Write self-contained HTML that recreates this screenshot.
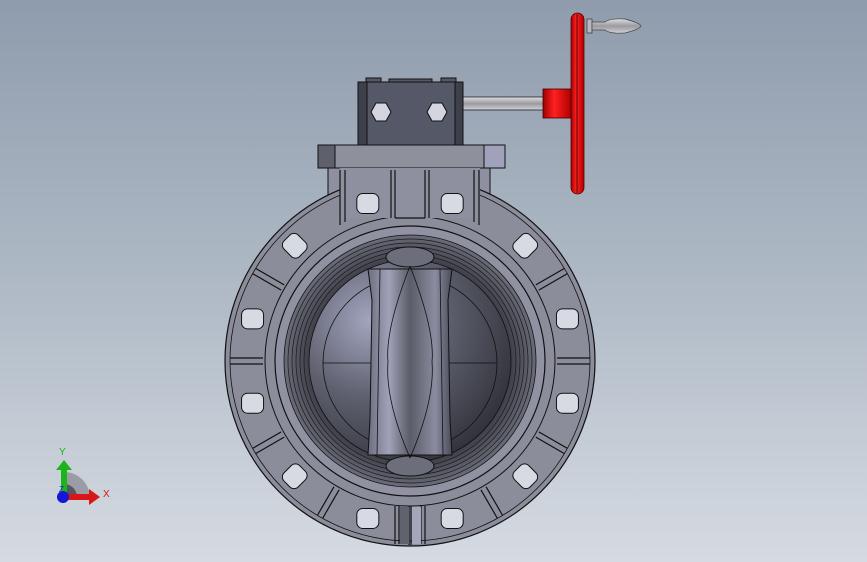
<!DOCTYPE html>
<html><head><meta charset="utf-8"><style>
html,body{margin:0;padding:0;width:867px;height:562px;overflow:hidden}
svg{display:block}
</style></head><body>
<svg width="867" height="562" viewBox="0 0 867 562" xmlns="http://www.w3.org/2000/svg">
<defs>
<linearGradient id="bg" x1="0" y1="0" x2="0" y2="1">
<stop offset="0" stop-color="#8f9cad"/><stop offset="0.55" stop-color="#b2bcc8"/><stop offset="1" stop-color="#d6dbe2"/>
</linearGradient>
<radialGradient id="ball" cx="0.3" cy="0.3" r="0.85">
<stop offset="0" stop-color="#a3a5c0"/><stop offset="0.45" stop-color="#5e606e"/><stop offset="1" stop-color="#2a2b32"/>
</radialGradient>
<radialGradient id="bore" cx="0.5" cy="0.5" r="0.5">
<stop offset="0.75" stop-color="#33343c"/><stop offset="1" stop-color="#6a6c78"/>
</radialGradient>
<linearGradient id="disc" x1="0" y1="0" x2="1" y2="0">
<stop offset="0" stop-color="#6d6f80"/><stop offset="0.25" stop-color="#a0a2b8"/><stop offset="0.5" stop-color="#5a5c68"/><stop offset="0.8" stop-color="#8a8ca0"/><stop offset="1" stop-color="#4a4c58"/>
</linearGradient>
<linearGradient id="red" x1="0" y1="0" x2="1" y2="0">
<stop offset="0" stop-color="#a00000"/><stop offset="0.4" stop-color="#ff2020"/><stop offset="1" stop-color="#b00000"/>
</linearGradient>
<linearGradient id="rod" x1="0" y1="0" x2="0" y2="1">
<stop offset="0" stop-color="#e0e0e4"/><stop offset="0.5" stop-color="#9a9aa0"/><stop offset="1" stop-color="#d0d0d6"/>
</linearGradient>
<g id="hole"><rect x="-11" y="-10" width="22" height="20" rx="6" fill="#d6dae2" stroke="#111" stroke-width="1"/></g>
</defs>
<rect width="867" height="562" fill="url(#bg)"/>

<!-- handwheel assembly -->
<rect x="463" y="97" width="82" height="13" fill="url(#rod)" stroke="#222" stroke-width="0.8"/>
<rect x="543" y="89" width="28" height="29" fill="url(#red)" stroke="#400" stroke-width="0.8"/>
<rect x="571" y="13" width="13" height="181" rx="6.5" fill="url(#red)" stroke="#500" stroke-width="0.8"/>
<line x1="577" y1="14" x2="577" y2="193" stroke="#300" stroke-width="0.8"/>
<rect x="587" y="19" width="5" height="14" fill="#b8b8c0" stroke="#333" stroke-width="0.7"/>
<path d="M592 22 L605 22 Q610 18 625 19 Q640 23 641 26 Q640 29 625 33 Q610 34 605 30 L592 30 Z" fill="url(#rod)" stroke="#444" stroke-width="0.7"/>

<!-- gearbox -->
<rect x="366" y="78" width="15" height="5" fill="#555866" stroke="#111"/>
<rect x="441" y="78" width="15" height="5" fill="#555866" stroke="#111"/>
<rect x="389" y="79" width="43" height="4" fill="#555866" stroke="#111"/>
<rect x="358" y="82" width="105" height="64" fill="#555867" stroke="#111"/>
<rect x="358" y="82" width="9" height="64" fill="#3e404b" stroke="#111"/>
<rect x="455" y="82" width="8" height="64" fill="#3e404b" stroke="#111"/>
<polygon points="376,103 386,103 391,112 386,121 376,121 371,112" fill="#d4d5e0" stroke="#111"/>
<polygon points="432,103 442,103 447,112 442,121 432,121 427,112" fill="#d4d5e0" stroke="#111"/>

<!-- neck -->
<rect x="328" y="168" width="162" height="40" fill="#8e909f" stroke="#111"/>
<rect x="318" y="145" width="187" height="23" fill="#8e909c" stroke="#111"/>
<rect x="318" y="145" width="17" height="23" fill="#5e606c" stroke="#111"/>
<rect x="484" y="145" width="21" height="23" fill="#a0a2bb" stroke="#111"/>

<!-- flange -->
<circle cx="410" cy="361" r="185" fill="#8b8d9b" stroke="#111" stroke-width="1.2"/>
<circle cx="410" cy="361" r="180" fill="none" stroke="#111" stroke-width="0.8"/>
<circle cx="410" cy="361" r="145" fill="none" stroke="#111" stroke-width="1"/>
<rect x="340" y="168" width="140" height="50" fill="#8e909f" stroke="none"/>
<g stroke="#111" stroke-width="1.2">
<line x1="340" y1="170" x2="340" y2="225"/><line x1="345" y1="170" x2="345" y2="222"/>
<line x1="391" y1="170" x2="391" y2="218"/><line x1="395" y1="170" x2="395" y2="218"/>
<line x1="425" y1="170" x2="425" y2="218"/><line x1="429" y1="170" x2="429" y2="218"/>
<line x1="474" y1="170" x2="474" y2="222"/><line x1="479" y1="170" x2="479" y2="225"/>
<line x1="395" y1="218" x2="425" y2="218"/>
</g>
<g stroke="#111" stroke-width="1.2" fill="none">
<g transform="translate(410,361)">
<line x1="147" y1="-3" x2="180" y2="-3"/><line x1="147" y1="3" x2="180" y2="3"/>
<line x1="-147" y1="-3" x2="-180" y2="-3"/><line x1="-147" y1="3" x2="-180" y2="3"/>
<g transform="rotate(30)"><line x1="147" y1="-3" x2="180" y2="-3"/><line x1="147" y1="3" x2="180" y2="3"/></g>
<g transform="rotate(60)"><line x1="147" y1="-3" x2="180" y2="-3"/><line x1="147" y1="3" x2="180" y2="3"/></g>
<g transform="rotate(120)"><line x1="147" y1="-3" x2="180" y2="-3"/><line x1="147" y1="3" x2="180" y2="3"/></g>
<g transform="rotate(150)"><line x1="147" y1="-3" x2="180" y2="-3"/><line x1="147" y1="3" x2="180" y2="3"/></g>
<g transform="rotate(-30)"><line x1="147" y1="-3" x2="180" y2="-3"/><line x1="147" y1="3" x2="180" y2="3"/></g>
<g transform="rotate(-150)"><line x1="147" y1="-3" x2="180" y2="-3"/><line x1="147" y1="3" x2="180" y2="3"/></g>
<line x1="-15" y1="145" x2="-15" y2="183"/><line x1="-11" y1="145" x2="-11" y2="183"/>
<line x1="11" y1="145" x2="11" y2="183"/><line x1="15" y1="145" x2="15" y2="183"/>
<line x1="-1" y1="145" x2="-1" y2="184"/><line x1="1" y1="145" x2="1" y2="184"/>
</g>
</g>
<rect x="400" y="507" width="9" height="37" fill="#606270"/>
<rect x="412" y="507" width="9" height="37" fill="#a4a6bc"/>
<g transform="translate(410,361)">
<g transform="rotate(15) translate(163,0) rotate(-15)"><use href="#hole"/></g>
<g transform="rotate(45) translate(163,0)"><use href="#hole"/></g>
<g transform="rotate(75) translate(163,0) rotate(-75)"><use href="#hole"/></g>
<g transform="rotate(105) translate(163,0) rotate(-105)"><use href="#hole"/></g>
<g transform="rotate(135) translate(163,0)"><use href="#hole"/></g>
<g transform="rotate(165) translate(163,0) rotate(-165)"><use href="#hole"/></g>
<g transform="rotate(195) translate(163,0) rotate(-195)"><use href="#hole"/></g>
<g transform="rotate(225) translate(163,0)"><use href="#hole"/></g>
<g transform="rotate(255) translate(163,0) rotate(-255)"><use href="#hole"/></g>
<g transform="rotate(285) translate(163,0) rotate(-285)"><use href="#hole"/></g>
<g transform="rotate(315) translate(163,0)"><use href="#hole"/></g>
<g transform="rotate(345) translate(163,0) rotate(-345)"><use href="#hole"/></g>
</g>

<!-- bore -->
<circle cx="410" cy="361" r="135" fill="#9092a2" stroke="#111" stroke-width="1.2"/>
<circle cx="410" cy="361" r="126" fill="url(#bore)" stroke="#111" stroke-width="0.8"/>
<g fill="none" stroke="#1a1a1f" stroke-width="0.7">
<circle cx="410" cy="361" r="122"/><circle cx="410" cy="361" r="118"/><circle cx="410" cy="361" r="114"/>
<circle cx="410" cy="361" r="110"/><circle cx="410" cy="361" r="106"/>
</g>
<circle cx="410" cy="361" r="101" fill="url(#ball)" stroke="#111" stroke-width="0.8"/>
<circle cx="410" cy="363" r="87" fill="none" stroke="#111" stroke-width="0.8"/>
<line x1="323" y1="363" x2="497" y2="363" stroke="#111" stroke-width="0.8"/>

<!-- disc -->
<ellipse cx="410" cy="257" rx="24" ry="10" fill="#6c6e7c" stroke="#111"/>
<ellipse cx="410" cy="466" rx="24" ry="10" fill="#6c6e7c" stroke="#111"/>
<path d="M368 269 L452 269 L448 300 L450 420 L452 455 L368 455 L370 420 L372 300 Z" fill="url(#disc)" stroke="#111"/>
<g fill="none" stroke="#111" stroke-width="0.8">
<path d="M380 269 L377 455"/><path d="M440 269 L443 455"/>
<path d="M410 266 Q385 330 388 362 Q385 400 410 458"/>
<path d="M410 266 Q435 330 432 362 Q435 400 410 458"/>
</g>

<!-- triad -->
<path d="M64 472 L64 497 L90 497 A26 26 0 0 0 64 472 Z" fill="#9a9ca6"/>
<path d="M64 484 L64 497 L77 497 A13 13 0 0 0 64 484 Z" fill="#55565e"/>
<rect x="61" y="470" width="6" height="27" fill="#1bb51b"/>
<polygon points="56,470 64,460 72,470" fill="#1bb51b"/>
<rect x="64" y="494" width="26" height="6" fill="#d81818"/>
<polygon points="89,489 100,497 89,505" fill="#d81818"/>
<circle cx="63" cy="497" r="6" fill="#1616d8"/>
<text x="59" y="455" font-family="Liberation Sans, sans-serif" font-size="10" fill="#1bb51b">Y</text>
<text x="103" y="497" font-family="Liberation Sans, sans-serif" font-size="10" fill="#d81818">X</text>
<text x="59" y="492" font-family="Liberation Sans, sans-serif" font-size="8" fill="#1616d8">Z</text>
</svg>
</body></html>
